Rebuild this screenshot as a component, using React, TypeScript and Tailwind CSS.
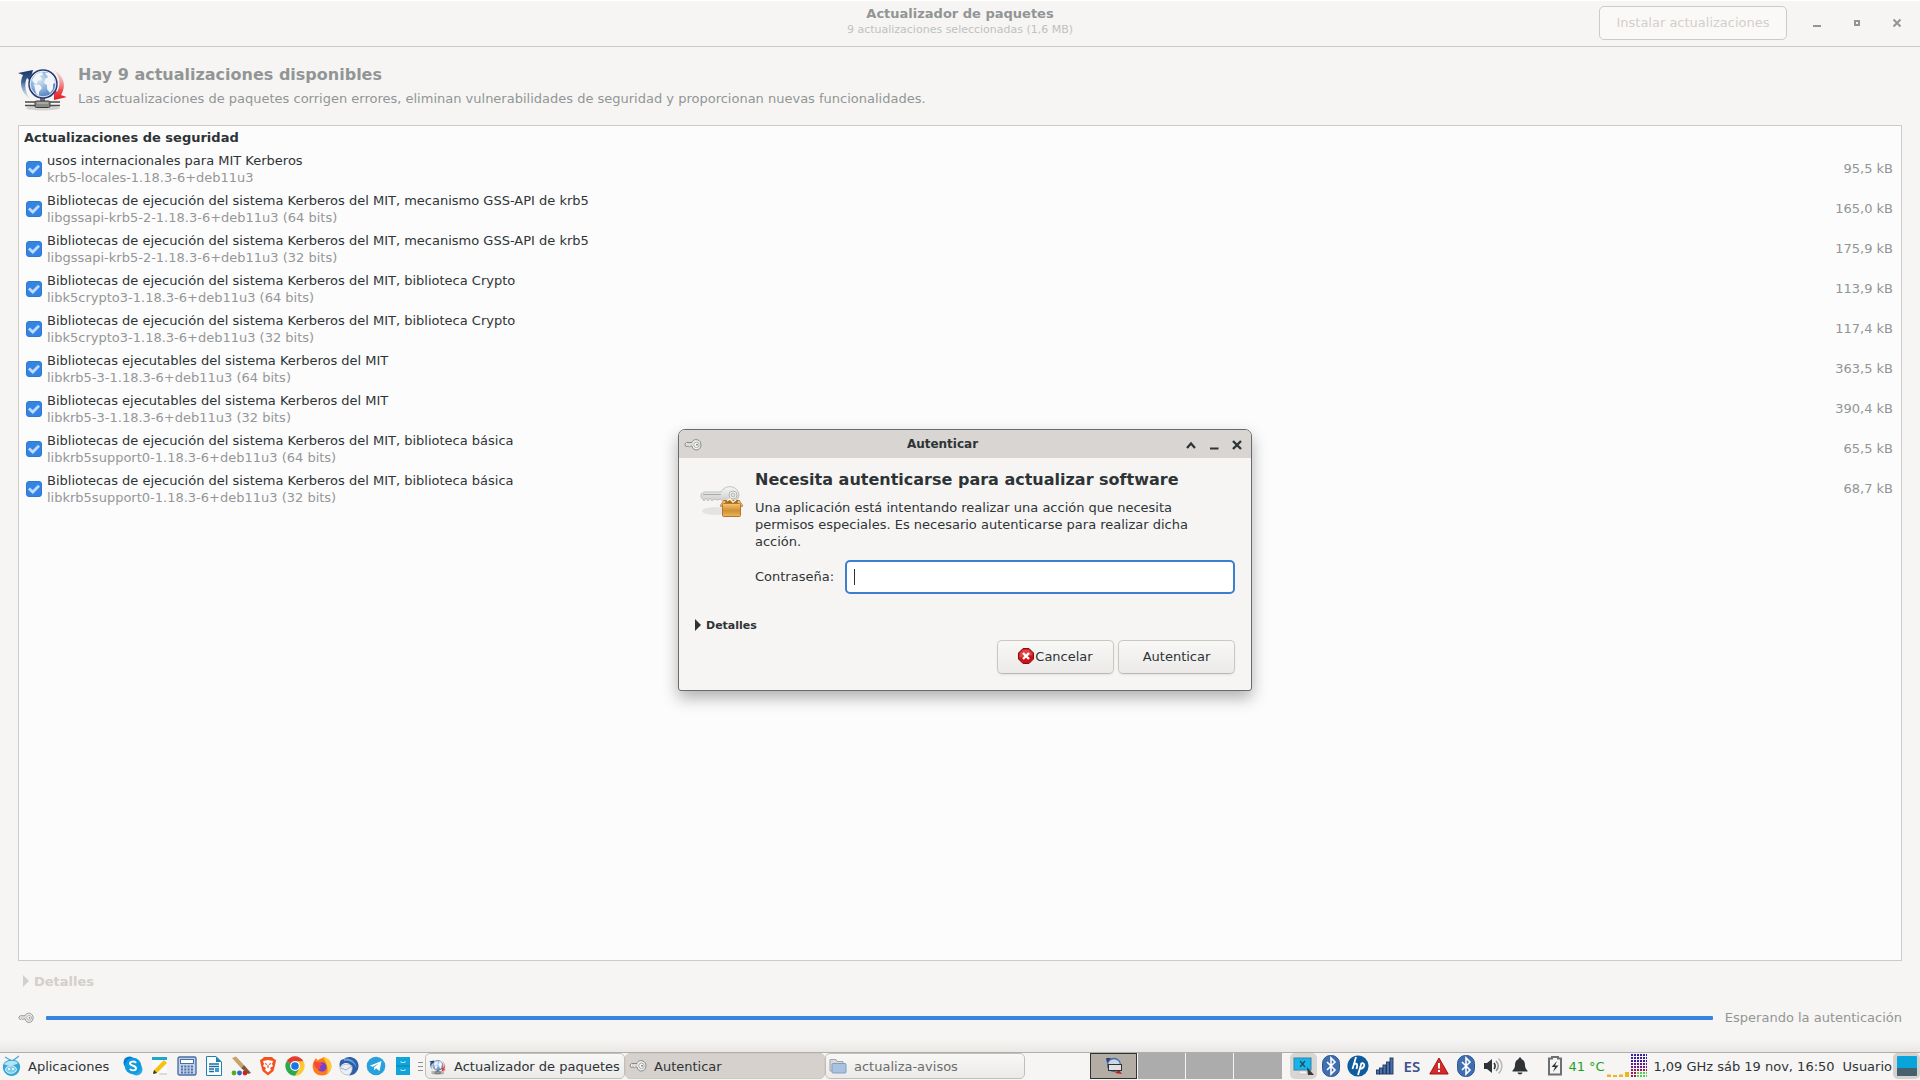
import type { ReactNode } from "react";

interface Update {
    id: number;
    title: string;
    pkg: string;
    size: string;
}

const updates: Update[] = [
    { id: 1, title: "usos internacionales para MIT Kerberos", pkg: "krb5-locales-1.18.3-6+deb11u3", size: "95,5 kB" },
    { id: 2, title: "Bibliotecas de ejecución del sistema Kerberos del MIT, mecanismo GSS-API de krb5", pkg: "libgssapi-krb5-2-1.18.3-6+deb11u3 (64 bits)", size: "165,0 kB" },
    { id: 3, title: "Bibliotecas de ejecución del sistema Kerberos del MIT, mecanismo GSS-API de krb5", pkg: "libgssapi-krb5-2-1.18.3-6+deb11u3 (32 bits)", size: "175,9 kB" },
    { id: 4, title: "Bibliotecas de ejecución del sistema Kerberos del MIT, biblioteca Crypto", pkg: "libk5crypto3-1.18.3-6+deb11u3 (64 bits)", size: "113,9 kB" },
    { id: 5, title: "Bibliotecas de ejecución del sistema Kerberos del MIT, biblioteca Crypto", pkg: "libk5crypto3-1.18.3-6+deb11u3 (32 bits)", size: "117,4 kB" },
    { id: 6, title: "Bibliotecas ejecutables del sistema Kerberos del MIT", pkg: "libkrb5-3-1.18.3-6+deb11u3 (64 bits)", size: "363,5 kB" },
    { id: 7, title: "Bibliotecas ejecutables del sistema Kerberos del MIT", pkg: "libkrb5-3-1.18.3-6+deb11u3 (32 bits)", size: "390,4 kB" },
    { id: 8, title: "Bibliotecas de ejecución del sistema Kerberos del MIT, biblioteca básica", pkg: "libkrb5support0-1.18.3-6+deb11u3 (64 bits)", size: "65,5 kB" },
    { id: 9, title: "Bibliotecas de ejecución del sistema Kerberos del MIT, biblioteca básica", pkg: "libkrb5support0-1.18.3-6+deb11u3 (32 bits)", size: "68,7 kB" },
];

function UpdaterIcon({ size }: { size: number }) {
    return (
        <svg width={size} height={size} viewBox="0 0 48 48" className="shrink-0">
            <defs>
                <radialGradient id="globe" cx="0.4" cy="0.35" r="0.75">
                    <stop offset="0" stopColor="#d8e6f5" />
                    <stop offset="0.5" stopColor="#86add9" />
                    <stop offset="1" stopColor="#3a6ab0" />
                </radialGradient>
                <linearGradient id="arrowBlue" x1="0" y1="0" x2="0" y2="1">
                    <stop offset="0" stopColor="#17375f" />
                    <stop offset="0.4" stopColor="#3d6296" />
                    <stop offset="1" stopColor="#9db4d2" stopOpacity="0.2" />
                </linearGradient>
                <linearGradient id="arrowRed" x1="0" y1="0" x2="0" y2="1">
                    <stop offset="0" stopColor="#f3b0ae" stopOpacity="0.3" />
                    <stop offset="0.7" stopColor="#ea4a4c" />
                    <stop offset="1" stopColor="#e01b24" />
                </linearGradient>
            </defs>
            <ellipse cx="25" cy="45" rx="17" ry="2.5" fill="#000" opacity="0.15" />
            <path d="M0 10 L15 7 L12 18 L9 15 C6 21 7 29 12 36 C3 30 1 20 5 12 Z" fill="url(#arrowBlue)" />
            <path d="M36 7 C47 13 48 24 43 32 L49 34 L36 37 L36 25 L39 29 C43 22 42 14 36 7 Z" fill="url(#arrowRed)" />
            <rect x="22" y="34" width="5" height="7" fill="#70726f" />
            <path d="M7 39 H18 M31 39 H42 M7 42.5 H18 M31 42.5 H42" stroke="#4a4c49" strokeWidth="1.4" />
            <rect x="17" y="38" width="15" height="6.5" rx="1.5" fill="#888a85" stroke="#3c3e3b" />
            <path d="M19 40 H30" stroke="#c6c8c3" />
            <circle cx="25" cy="21" r="14" fill="url(#globe)" stroke="#2c3a74" strokeWidth="1.5" />
            <circle cx="25" cy="21" r="12.8" fill="none" stroke="#fff" strokeWidth="1" opacity="0.8" />
            <path d="M14 17 L18 11 L24 9 L25 12 L22 13 L24 16 L20 18 L19 21 L16 20 Z" fill="#f2f6fb" />
            <path d="M16 21 L22 22 L24 25 L21 29 L21 33 L18 30 L17 26 Z" fill="#f2f6fb" />
            <path d="M27 10 L32 10 L36 14 L37 20 L35 21 L35 26 L32 30 L29 26 L29 22 L26 20 L27 16 L30 14 Z" fill="#f2f6fb" />
        </svg>
    );
}

function KeyIcon({ width = 18 }: { width?: number }) {
    return (
        <svg width={width} height="14" viewBox="0 0 18 14" className="shrink-0">
            <path d="M8 4.5 H2.5 L1 6 L1.5 8 L3 8.5 L4 7.8 L5.5 8.8 L6.5 8 H8 C9 14 17 13 17 6.8 C17 0.8 9 0 8 4.5 Z" fill="#eeeeec" stroke="#888a85" />
            <path d="M3 6 H9" stroke="#c5c7c2" />
            <circle cx="12.5" cy="6.8" r="2.7" fill="#fafafa" stroke="#a9aba6" />
            <circle cx="13" cy="6.8" r="1" fill="#888a85" />
        </svg>
    );
}

function KeyPackageIcon() {
    return (
        <svg width="48" height="40" viewBox="0 0 48 40" className="shrink-0">
            <defs>
                <linearGradient id="keyMetal" x1="0" y1="0" x2="0" y2="1">
                    <stop offset="0" stopColor="#f6f6f5" />
                    <stop offset="1" stopColor="#c6c7c4" />
                </linearGradient>
                <linearGradient id="boxFace" x1="0" y1="0" x2="0" y2="1">
                    <stop offset="0" stopColor="#f3c676" />
                    <stop offset="0.55" stopColor="#d08f32" />
                    <stop offset="1" stopColor="#eab65f" />
                </linearGradient>
            </defs>
            <ellipse cx="16" cy="27" rx="13" ry="4" fill="#000" opacity="0.07" />
            <path d="M22 8 H5 L2 10 V13 L5 17 L7 14 L9 17 L11 14 L13 17 L15 15 L18 16 L22 15 C26 23 39 20 40 11 C39 1 26 0 22 8 Z" fill="url(#keyMetal)" stroke="#c0c1be" />
            <path d="M4 10.5 H22" stroke="#a9aba7" />
            <circle cx="34" cy="11" r="4" fill="#f6f5f4" stroke="#b4b6b2" />
            <circle cx="34" cy="11" r="2" fill="#e1e2e0" stroke="#b4b6b2" />
            <path d="M25 16 L40 16 L42 20 H23 Z" fill="#a76a19" />
            <path d="M25 16 L21 22 L24 23 L27 18 Z M40 16 L44 22 L41 23 L38 18 Z" fill="#efc07a" stroke="#b9762a" strokeWidth="0.8" />
            <rect x="23.5" y="19.5" width="18" height="13" rx="1" fill="url(#boxFace)" stroke="#b9762a" />
            <path d="M28 17 L31 15 L34 18 L37 16" stroke="#fff3d8" strokeWidth="1.4" fill="none" />
        </svg>
    );
}

function CancelIcon() {
    return (
        <svg width="16" height="18" viewBox="0 0 16 18" className="shrink-0">
            <path d="M5 1.5 H11 L15.5 6 V12 L11 16.5 H5 L0.5 12 V6 Z" fill="#cc1118" stroke="#8b0a0e" />
            <path d="M5.4 2.5 H10.6 L14.5 6.4 V8 C10 10 5 9 1.5 11 V6.4 Z" fill="#e8575b" opacity="0.7" />
            <path d="M5 6 L11 12 M11 6 L5 12" stroke="#fff" strokeWidth="2.4" />
        </svg>
    );
}

function BluetoothIcon() {
    return (
        <svg width="18" height="22" viewBox="0 0 18 22">
            <rect x="0.5" y="0.5" width="17" height="21" rx="8" fill="#3f6fb0" stroke="#2d568f" />
            <path d="M5 7 L13 15 L9 19 V3 L13 7 L5 15" fill="none" stroke="#fff" strokeWidth="1.6" />
        </svg>
    );
}

function MouseIcon() {
    return (
        <svg width="20" height="22" viewBox="0 0 20 22">
            <path d="M3 2 L9 5.5 M17 1 L11 5.5" stroke="#4aa8cf" strokeWidth="1.2" />
            <path d="M1 10 C3 4 14 3 17 8 C20 12 17 21 10 21 C4 21 0 16 1 10 Z" fill="#35a6d6" />
            <path d="M2 9 C6 5 13 5 16 8 C14 10 6 12 2 9 Z" fill="#b4e4f5" />
            <ellipse cx="9" cy="14.5" rx="5.5" ry="3.8" fill="#7fcdeb" stroke="#d8f1fa" />
            <circle cx="7" cy="14" r="1.1" fill="#fff" />
            <circle cx="11" cy="14" r="1.1" fill="#fff" />
        </svg>
    );
}

const launchers: { name: string; icon: ReactNode }[] = [
    {
        name: "Skype",
        icon: (
            <svg width="20" height="20" viewBox="0 0 20 20">
                <circle cx="6.5" cy="6.5" r="6" fill="#0078d4" />
                <circle cx="13.5" cy="13.5" r="6" fill="#28a8ea" />
                <circle cx="10" cy="10" r="8.3" fill="#0f9be0" />
                <path d="M13 7 C12 5 7 5 7 7.6 C7 10.3 13 9.2 13 12.2 C13 15 8 15 7 12.8" stroke="#fff" strokeWidth="1.9" fill="none" />
            </svg>
        ),
    },
    {
        name: "Editor de texto",
        icon: (
            <svg width="18" height="20" viewBox="0 0 18 20">
                <rect x="1" y="3" width="15" height="16" fill="#fafafa" />
                <rect x="1" y="1" width="15" height="3" fill="#1fa6c9" />
                <path d="M3 14 L13 4 L16 7 L6 17 L2 18 Z" fill="#f5c211" />
                <path d="M3 14 L6 17 L2 18 Z" fill="#333" />
                <path d="M8 18 H16" stroke="#bbb" />
            </svg>
        ),
    },
    {
        name: "Calculadora",
        icon: (
            <svg width="20" height="20" viewBox="0 0 20 20">
                <rect x="1" y="1" width="18" height="18" rx="1.5" fill="#c3d2e8" stroke="#4a6fa5" strokeWidth="1.4" />
                <rect x="3.5" y="3.5" width="13" height="4" fill="#fff" stroke="#4a6fa5" />
                <path d="M4 10.5 H16 M4 13.5 H16 M4 16.5 H16" stroke="#4a6fa5" strokeWidth="1.8" strokeDasharray="2 1.3" />
            </svg>
        ),
    },
    {
        name: "Writer",
        icon: (
            <svg width="18" height="20" viewBox="0 0 18 20">
                <path d="M1.5 0.5 H11 L16.5 6 V19.5 H1.5 Z" fill="#fff" stroke="#1a83b5" />
                <path d="M11 0.5 L16.5 6 H11 Z" fill="#1a83b5" />
                <path d="M4 8 H14 M4 10.5 H14 M4 13 H9 M4 15.5 H9" stroke="#1a6fa0" strokeWidth="1.3" />
                <rect x="10" y="12" width="4" height="4" fill="#3c9fcf" />
            </svg>
        ),
    },
    {
        name: "Pintura",
        icon: (
            <svg width="20" height="20" viewBox="0 0 20 20">
                <path d="M1 2 L5 0.5 L13 9 L10 12 Z" fill="#c8a46a" />
                <path d="M10 12 L13 9 L20 17 L17 18 Z" fill="#7c5a3b" />
                <circle cx="3" cy="17" r="2.4" fill="#4caf28" />
                <circle cx="8.5" cy="17" r="2.4" fill="#3465c4" />
                <circle cx="14" cy="17" r="2.4" fill="#cc2222" />
            </svg>
        ),
    },
    {
        name: "Brave",
        icon: (
            <svg width="18" height="20" viewBox="0 0 18 20">
                <path d="M5 1 H13 L15 3 L17 4 L16.5 7 L14.5 15 L9 19.5 L3.5 15 L1.5 7 L1 4 L3 3 Z" fill="#f4511e" />
                <path d="M9 4 L14 5 L13 8 L14 10 L11 12 L12 14 L9 16.5 L6 14 L7 12 L4 10 L5 8 L4 5 Z" fill="#fff" />
                <path d="M6 7.5 L8 8.5 M12 7.5 L10 8.5 M9 9 V12" stroke="#f4511e" strokeWidth="1.2" />
            </svg>
        ),
    },
    {
        name: "Chrome",
        icon: (
            <svg width="20" height="20" viewBox="0 0 20 20">
                <path d="M10 10 L1.6 5.2 A9.7 9.7 0 0 1 18.4 5.2 Z" fill="#e33b2e" />
                <path d="M10 10 L18.4 5.2 A9.7 9.7 0 0 1 10 19.7 Z" fill="#fcc934" />
                <path d="M10 10 L10 19.7 A9.7 9.7 0 0 1 1.6 5.2 Z" fill="#2da94f" />
                <path d="M10 5.2 H18.4 L14 12.5 Z" fill="#fcc934" />
                <path d="M5.8 12.5 L10 14.8 L14.2 12.5 L10 19.7 Z" fill="#2da94f" />
                <circle cx="10" cy="10" r="4.9" fill="#fff" />
                <circle cx="10" cy="10" r="3.8" fill="#1a73e8" />
            </svg>
        ),
    },
    {
        name: "Firefox",
        icon: (
            <svg width="20" height="20" viewBox="0 0 20 20">
                <path d="M2 5 L4 2 L5.5 4.5 C8 2 11 3 11 1 C17 2 20 7 19.3 11.5 C18.5 16.5 14.5 19.5 10 19.5 C5 19.5 1 16 0.7 11 C0.6 8.5 1 7 2 5 Z" fill="#ff7a1a" />
                <path d="M11 1 C17 2 20 7 19.3 11.5 C19 14 17 17 15 18 C17 12 14 6 11 1 Z" fill="#ffcc2f" />
                <circle cx="10" cy="11" r="4.7" fill="#7a3fd0" />
                <path d="M2 6 C6 5 9 7 11 9 C8 9 7 11 9 13 C5 14 2 11 2 6 Z" fill="#f0483e" />
            </svg>
        ),
    },
    {
        name: "Thunderbird",
        icon: (
            <svg width="20" height="20" viewBox="0 0 20 20">
                <path d="M2 4 L5 3 C9 -1 18 1 19.3 8 C20.5 14 16 19.5 10 19.5 C14 16 14 8 8 7 C4 6.5 2 9 1 12 C0 9 0.5 6 2 4 Z" fill="#2d5fa8" />
                <path d="M5 3 C10 1 17 5 17.5 12 C15 6 10 4 5 5 Z" fill="#6d9fd8" />
                <path d="M1 12 C3 8 9 7 13 10 C14 15 11 19 8 19 C4 18.5 1.5 16 1 12 Z" fill="#eceff4" stroke="#9fb0c8" strokeWidth="0.7" />
                <path d="M2 12 L7 14 L13 10" fill="none" stroke="#9fb0c8" />
            </svg>
        ),
    },
    {
        name: "Telegram",
        icon: (
            <svg width="20" height="20" viewBox="0 0 20 20">
                <circle cx="10" cy="10" r="9.3" fill="#27a0dc" />
                <path d="M3.8 9.8 L15.5 5 L13.5 15 L10 12.3 L8.2 14.3 L8 11.3 L13 7.2 L6.8 10.8 Z" fill="#fff" />
            </svg>
        ),
    },
    {
        name: "Archivador",
        icon: (
            <svg width="16" height="20" viewBox="0 0 16 20">
                <rect x="1" y="1" width="14" height="18" fill="#10a5da" />
                <path d="M1 10 H15" stroke="#0b7ead" />
                <path d="M6 5 V6.5 H10 V5 M6 13 V14.5 H10 V13" fill="none" stroke="#a5e2f7" />
            </svg>
        ),
    },
];

const trayIcons: { name: string; icon: ReactNode }[] = [
    { name: "Bluetooth", icon: <BluetoothIcon /> },
    {
        name: "Impresora HP",
        icon: (
            <svg width="22" height="22" viewBox="0 0 22 22">
                <circle cx="11" cy="11" r="10.6" fill="#0f5c9c" />
                <path d="M9 2 L5.5 14 M6.5 10 C10 7 11 9 9.5 14" fill="none" stroke="#fff" strokeWidth="1.8" />
                <path d="M14.5 8 L11 20 M14 8.5 C19 7 18 13.5 12.5 13.8" fill="none" stroke="#fff" strokeWidth="1.8" />
            </svg>
        ),
    },
    {
        name: "Red",
        icon: (
            <svg width="18" height="18" viewBox="0 0 18 18">
                <g fill="#4a72b0" stroke="#1f3459" strokeWidth="0.9">
                    <rect x="0.5" y="13" width="3" height="4" />
                    <rect x="3.5" y="11" width="3" height="6" />
                    <rect x="7" y="8" width="3" height="9" />
                    <rect x="10.5" y="5" width="3" height="12" />
                    <rect x="14" y="1" width="3" height="16" />
                </g>
            </svg>
        ),
    },
    { name: "Idioma del teclado", icon: <span className="font-['Noto_Sans',sans-serif] text-[15px] font-semibold text-[#41508f]">ES</span> },
    {
        name: "Avisos",
        icon: (
            <svg width="20" height="18" viewBox="0 0 20 18">
                <path d="M10 1 L19.2 17 H0.8 Z" fill="#d42a2a" stroke="#a01515" strokeLinejoin="round" />
                <path d="M10 6 V11.5 M10 13 V15" stroke="#fff" strokeWidth="2" />
            </svg>
        ),
    },
    { name: "Bluetooth", icon: <BluetoothIcon /> },
    {
        name: "Volumen",
        icon: (
            <svg width="20" height="18" viewBox="0 0 20 18">
                <path d="M1 6 H4 L9 2 V16 L4 12 H1 Z" fill="#2e3436" />
                <path d="M11 6 C12.5 8 12.5 10 11 12" fill="none" stroke="#2e3436" strokeWidth="1.6" />
                <path d="M13 4 C16 7 16 11 13 14" fill="none" stroke="#8b8e8f" strokeWidth="1.5" />
                <path d="M15.5 1.5 C20 6 20 12 15.5 16.5" fill="none" stroke="#b9bbbb" strokeWidth="1.5" />
            </svg>
        ),
    },
    {
        name: "Notificaciones",
        icon: (
            <svg width="16" height="18" viewBox="0 0 16 18">
                <path d="M8 0.5 C9 0.5 9.5 1.2 9.3 2 C12 3 13 5 13 8 C13 11 14 12 15.5 13.5 V14.5 H0.5 V13.5 C2 12 3 11 3 8 C3 5 4 3 6.7 2 C6.5 1.2 7 0.5 8 0.5 Z" fill="#2e3436" />
                <path d="M5.5 15.5 H10.5 C10 18 6 18 5.5 15.5 Z" fill="#2e3436" />
            </svg>
        ),
    },
];

function TitleBar() {
    return (
        <header className="grid h-[47px] grid-cols-[1fr_auto_1fr] items-center border-b border-[#cdcac7] shadow-[inset_0_1px_0_#fff]">
            <div />
            <div className="pb-0.5 text-center">
                <h1 className="text-[13px] leading-4 font-bold text-[#929595]">Actualizador de paquetes</h1>
                <p className="text-[11px] leading-4 text-[#bfc1c0]">9 actualizaciones seleccionadas (1,6 MB)</p>
            </div>
            <div className="flex items-center justify-end pr-[15px]">
                <button className="mr-[22px] h-[34px] w-[188px] rounded-[5px] border border-[#cdcac7] bg-[#faf9f8] pb-0.5 text-[#d4cfca]">Instalar actualizaciones</button>
                <div className="flex gap-6 text-[#929595]">
                    <button aria-label="Minimizar">
                        <svg width="16" height="16" viewBox="0 0 16 16"><path d="M4 11 H12" stroke="currentColor" strokeWidth="2" /></svg>
                    </button>
                    <button aria-label="Maximizar">
                        <svg width="16" height="16" viewBox="0 0 16 16"><path d="M6 6 H10 V10 H6 Z" fill="none" stroke="currentColor" strokeWidth="2" /></svg>
                    </button>
                    <button aria-label="Cerrar">
                        <svg width="16" height="16" viewBox="0 0 16 16"><path d="M4.5 4.5 L11.5 11.5 M11.5 4.5 L4.5 11.5" stroke="currentColor" strokeWidth="2" /></svg>
                    </button>
                </div>
            </div>
        </header>
    );
}

function UpdateRow({ update }: { update: Update }) {
    return (
        <li className="flex h-10 items-center pr-2 pl-[7px]">
            <div className="grid size-4 shrink-0 place-items-center">
                <input
                    id={`update-${update.id}`}
                    type="checkbox"
                    defaultChecked
                    className="col-start-1 row-start-1 size-4 appearance-none rounded-[3px] border border-[#2c78d4] bg-[#3584e4]"
                />
                <svg width="12" height="12" viewBox="0 0 12 12" className="pointer-events-none col-start-1 row-start-1">
                    <path d="M1 5.5 L4.8 9 L11 2.8" fill="none" stroke="#c0dcfc" strokeWidth="2.8" />
                </svg>
            </div>
            <label htmlFor={`update-${update.id}`} className="ml-[5px] flex-1 leading-[17px]">
                <span className="block">{update.title}</span>
                <span className="block text-[#959797]">{update.pkg}</span>
            </label>
            <span className="pb-0.5 text-[#929595]">{update.size}</span>
        </li>
    );
}

function AuthDialog() {
    return (
        <form
            role="dialog"
            aria-labelledby="auth-title"
            className="absolute top-[429px] left-[678px] w-[574px] rounded-t-[7px] rounded-b-[3px] border border-[#6a6b69] bg-[#f6f5f4] shadow-[0_7px_16px_rgba(0,0,0,0.3)]"
            onSubmit={(e) => e.preventDefault()}
        >
            <div className="flex h-7 items-center rounded-t-[6px] bg-[#d9d5d2] pt-px pr-[6px] pl-[5px]">
                <KeyIcon />
                <h2 className="flex-1 text-center text-[12px] font-bold">Autenticar</h2>
                <div className="flex gap-[7px]">
                    <button type="button" aria-label="Enrollar">
                        <svg width="16" height="16" viewBox="0 0 16 16"><path d="M4 11 L8 6.5 L12 11" fill="none" stroke="currentColor" strokeWidth="2.2" /></svg>
                    </button>
                    <button type="button" aria-label="Minimizar">
                        <svg width="16" height="16" viewBox="0 0 16 16"><path d="M4 11.5 H12.5" stroke="currentColor" strokeWidth="2" /></svg>
                    </button>
                    <button type="button" aria-label="Cerrar">
                        <svg width="16" height="16" viewBox="0 0 16 16"><path d="M4 4 L12 12 M12 4 L4 12" stroke="currentColor" strokeWidth="2.4" /></svg>
                    </button>
                </div>
            </div>
            <div className="px-4 pt-[10px] pb-4">
                <div className="flex gap-2 pl-1">
                    <div className="pt-4">
                        <KeyPackageIcon />
                    </div>
                    <div className="flex-1">
                        <h3 id="auth-title" className="text-[16px] leading-6 font-bold">Necesita autenticarse para actualizar software</h3>
                        <p className="mt-[7px] w-[460px] leading-[17px]">
                            Una aplicación está intentando realizar una acción que necesita permisos especiales. Es necesario autenticarse para realizar dicha acción.
                        </p>
                        <div className="mt-[10px] flex items-center justify-between">
                            <label htmlFor="password" className="pb-0.5">Contraseña:</label>
                            <div className="relative w-[390px]">
                                <input
                                    id="password"
                                    type="password"
                                    className="block h-[34px] w-full rounded-[5px] border-2 border-[#3a7fd0] bg-white px-2 caret-transparent outline-none"
                                />
                                <span className="absolute top-[9px] left-[9px] h-4 w-px bg-[#2e3436]" />
                            </div>
                        </div>
                    </div>
                </div>
                <button type="button" className="mt-[22px] flex h-[18px] items-center gap-[5px] text-[11px] font-bold">
                    <svg width="6" height="12" viewBox="0 0 6 12"><path d="M0 0 L6 6 L0 12 Z" fill="currentColor" /></svg>
                    Detalles
                </button>
                <div className="mt-[6px] flex justify-end gap-1">
                    <button type="button" className="flex h-[34px] w-[117px] items-center justify-center gap-px rounded-[5px] border border-[#cdc7c2] border-b-[#bfb8b1] bg-linear-to-b from-[#f8f8f7] to-[#ebeae8] pb-0.5 shadow-[0_1px_2px_rgba(0,0,0,0.08)]">
                        <CancelIcon />
                        Cancelar
                    </button>
                    <button type="submit" className="h-[34px] w-[117px] rounded-[5px] border border-[#cdc7c2] border-b-[#bfb8b1] bg-linear-to-b from-[#f8f8f7] to-[#ebeae8] pb-0.5 shadow-[0_1px_2px_rgba(0,0,0,0.08)]">
                        Autenticar
                    </button>
                </div>
            </div>
        </form>
    );
}

function Taskbar() {
    return (
        <footer className="flex h-7 items-center border-t border-[#b0aea9] bg-[#f6f5f4] pb-px">
            <button className="flex w-[119px] items-center gap-[6px] pl-[2px]">
                <MouseIcon />
                Aplicaciones
            </button>
            <div className="flex">
                {launchers.map((l) => (
                    <button key={l.name} aria-label={l.name} className="flex w-[27px] justify-center">{l.icon}</button>
                ))}
            </div>
            <svg width="5" height="11" viewBox="0 0 5 11" className="ml-[2px] shrink-0">
                <path d="M0 1.5 H5 M0 5.5 H5 M0 9.5 H5" stroke="#8f918f" />
            </svg>

            <nav className="ml-[2px] flex">
                <button className="flex h-[26px] w-[200px] items-center gap-2 rounded-[5px] border border-[#c3beb8] bg-linear-to-b from-[#f8f8f7] to-[#ebeae8] pl-[3px]">
                    <UpdaterIcon size={17} />
                    Actualizador de paquetes
                </button>
                <button className="flex h-[26px] w-[200px] items-center gap-[7px] rounded-[5px] border border-[#cfc9c4] bg-[#d6d1cd] pl-[3px]">
                    <KeyIcon />
                    Autenticar
                </button>
                <button className="flex h-[26px] w-[200px] items-center gap-[7px] rounded-[5px] border border-[#c3beb8] bg-linear-to-b from-[#f8f8f7] to-[#ebeae8] pl-[3px] text-[#6a6d6d]">
                    <svg width="18" height="16" viewBox="0 0 18 16" className="shrink-0">
                        <path d="M1 1.5 H7 L8 3.5 H14 V13 H1 Z" fill="#d8d8d6" stroke="#a5a7a4" />
                        <rect x="3" y="5.5" width="14" height="9.5" rx="1" fill="#a9c2e0" stroke="#7f9fc6" />
                    </svg>
                    actualiza-avisos
                </button>
            </nav>

            <div className="ml-auto flex h-full items-center">
                <div className="flex h-full gap-px">
                    <button aria-label="Área de trabajo 1" className="flex w-[47px] items-center justify-center border border-[#2e3436] bg-[#b3ada6]">
                        <svg width="18" height="18" viewBox="0 0 18 18">
                            <circle cx="9" cy="8" r="6.5" fill="#c7d8ec" stroke="#4c6a9c" strokeWidth="1.3" />
                            <path d="M1 1 H6 L2 6 Z" fill="#2c4478" />
                            <path d="M10 16 L14 13 L17 17 Z" fill="#c01c1c" />
                            <rect x="3.5" y="7.5" width="13" height="6" fill="#e4e2df" stroke="#2e3436" />
                        </svg>
                    </button>
                    <button aria-label="Área de trabajo 2" className="w-[47px] bg-[#acacac]" />
                    <button aria-label="Área de trabajo 3" className="w-[47px] bg-[#acacac]" />
                    <button aria-label="Área de trabajo 4" className="w-[48px] bg-[#acacac]" />
                </div>

                <div className="ml-2 flex h-full items-center">
                    <button aria-label="Pantalla" className="flex h-[26px] w-[27px] items-center justify-center rounded-[5px] bg-[#d9d5d1]">
                        <svg width="22" height="20" viewBox="0 0 22 20">
                            <rect x="1" y="2" width="17" height="12" fill="#18b4ec" stroke="#2a86a8" />
                            <path d="M7 5 L12 11 M12 5 L7 11" stroke="#1d4e63" strokeWidth="1.3" />
                            <rect x="6" y="15" width="8" height="3" fill="#f2f2f2" stroke="#bbb" strokeWidth="0.6" />
                            <path d="M14 11 L21 19 L15 19 Z" fill="#3a3a3a" />
                        </svg>
                    </button>
                    {trayIcons.map((t, i) => (
                        <button key={i} aria-label={t.name} className="flex w-[27px] items-center justify-center">{t.icon}</button>
                    ))}
                </div>

                <svg width="16" height="20" viewBox="0 0 16 20" className="ml-[14px] shrink-0">
                    <path d="M5 2.5 V1 H11 V2.5 H14 V18.5 H2 V2.5 Z" fill="#f6f5f4" stroke="#6d7072" strokeWidth="2" />
                    <path d="M10 5 L4.5 11 H8 L6 16 L11.5 9.5 H8 Z" fill="#2e3436" />
                </svg>
                <span className="ml-[5px] w-[38px] text-[#1fa11f]">41 °C</span>
                <svg width="40" height="24" viewBox="0 0 40 24" className="ml-px shrink-0">
                    <path d="M0 20.5 H4 V23 H0 Z M6 21 H10 V23 H6 Z M12 20.5 H16 V23 H12 Z M18 18 H22 V23 H18 Z" fill="#f0b41e" />
                    <path d="M24 1 H40 M24 4 H40 M24 7 H40" stroke="#3a1fa0" strokeWidth="2" strokeDasharray="2 1" />
                    <path d="M24 10 H40 M24 13 H40" stroke="#6a1a86" strokeWidth="2" strokeDasharray="2 1" />
                    <path d="M24 16 H40 M24 19 H30 M24 22 H30" stroke="#9c1a50" strokeWidth="2" strokeDasharray="2 1" />
                    <path d="M30 19 H40 M30 22 H40" stroke="#5ac85a" strokeWidth="2" strokeDasharray="2 1" />
                </svg>
                <span className="ml-[6px]">1,09 GHz</span>
                <span className="ml-1">sáb 19 nov, 16:50</span>
                <button className="ml-2">Usuario</button>
                <button aria-label="Mostrar el escritorio" className="ml-px flex h-[26px] w-[27px] items-center justify-center rounded-[5px] bg-[#d6d1cd]">
                    <svg width="20" height="20" viewBox="0 0 20 20">
                        <rect width="20" height="20" rx="1" fill="#08a5dc" />
                        <rect y="12" width="20" height="8" rx="1" fill="#47606e" />
                    </svg>
                </button>
            </div>
        </footer>
    );
}

export default function App() {
    return (
        <div className="relative flex min-h-screen flex-col bg-[#f6f5f4] font-['DejaVu_Sans',sans-serif] text-[13px] leading-[17px] whitespace-nowrap text-[#2e3436] [&_p]:whitespace-normal">
            <TitleBar />
            <main className="flex flex-1 flex-col px-[18px] pt-4">
                <div className="flex gap-3 text-[#929595]">
                    <UpdaterIcon size={48} />
                    <div>
                        <h2 className="text-[16px] leading-6 font-bold">Hay 9 actualizaciones disponibles</h2>
                        <p className="leading-6">
                            Las actualizaciones de paquetes corrigen errores, eliminan vulnerabilidades de seguridad y proporcionan nuevas funcionalidades.
                        </p>
                    </div>
                </div>

                <section className="mt-[14px] flex-1 border border-[#cdcac7] bg-[#fcfcfc]">
                    <h3 className="pl-[5px] leading-[23px] font-bold">Actualizaciones de seguridad</h3>
                    <ul>
                        {updates.map((u) => (
                            <UpdateRow key={u.id} update={u} />
                        ))}
                    </ul>
                </section>

                <button className="mt-[10px] flex h-5 items-center gap-[5px] self-start pl-[5px] font-bold text-[#d4cfca]">
                    <svg width="6" height="12" viewBox="0 0 6 12"><path d="M0 0 L6 6 L0 12 Z" fill="currentColor" /></svg>
                    Detalles
                </button>
                <div className="mt-[17px] flex h-5 items-center">
                    <KeyIcon width={16} />
                    <div role="progressbar" aria-label="Progreso" className="mr-3 ml-3 h-1 flex-1 rounded-[1px] bg-[#3584e4]" />
                    <span className="pb-0.5 text-[#929595]">Esperando la autenticación</span>
                </div>
                <div className="-mx-[18px] mt-3 h-3 bg-linear-to-b from-[#f6f5f4] to-[#e9e8e6]" />
            </main>
            <Taskbar />
            <AuthDialog />
        </div>
    );
}
